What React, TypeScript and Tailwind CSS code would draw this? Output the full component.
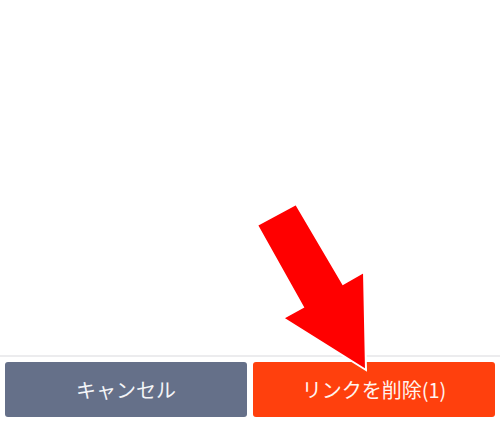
import React from 'react';

const FONT = { fontFamily: '"Noto Sans CJK JP", "Noto Sans", sans-serif' };

const Arrow: React.FC = () => (
  <svg className="absolute left-0 top-0 pointer-events-none" width={500} height={423} viewBox="0 0 500 423">
    <polygon
      points="257,225 296,204 343,284 364,272 366,370 283,318 303,307"
      fill="#ff0000"
      stroke="#ffffff"
      strokeWidth={2}
      strokeLinejoin="miter"
    />
  </svg>
);

export default function App() {
  return (
    <div className="relative w-[500px] h-[423px] bg-white flex flex-col overflow-hidden" style={FONT}>
      <div className="flex-1" />
      <div className="border-t-2 border-[#ececee] px-[5px] pt-[5px] pb-[6px] flex gap-[6px]">
        <button className="flex-1 h-[55px] rounded-[3px] bg-[#657089] text-[#f4f5f8] text-[20px] flex items-center justify-center">
          キャンセル
        </button>
        <button className="flex-1 h-[55px] rounded-[3px] bg-[#ff400d] text-[#fff4ef] text-[20px] flex items-center justify-center">
          リンクを削除(1)
        </button>
      </div>
      <Arrow />
    </div>
  );
}
